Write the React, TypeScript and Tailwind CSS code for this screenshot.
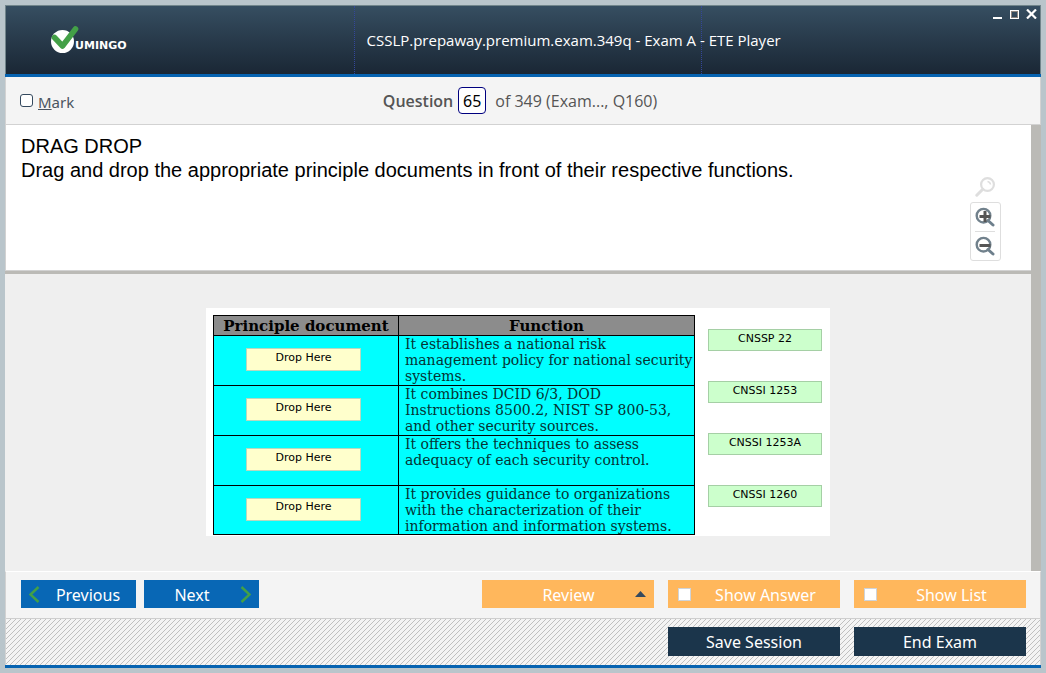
const rows = [
  ['It establishes a national risk', 'management policy for national security', 'systems.'],
  ['It combines DCID 6/3, DOD', 'Instructions 8500.2, NIST SP 800-53,', 'and other security sources.'],
  ['It offers the techniques to assess', 'adequacy of each security control.'],
  ['It provides guidance to organizations', 'with the characterization of their', 'information and information systems.'],
];

const documents = ['CNSSP 22', 'CNSSI 1253', 'CNSSI 1253A', 'CNSSI 1260'];

function Logo() {
  return (
    <div className="flex items-center">
      <svg width="28" height="28" viewBox="0 0 28 28" aria-hidden="true">
        <circle cx="11.5" cy="15.5" r="11.5" fill="#fff" />
        <path d="M3.5 11.5 L11.5 20 L24.5 3" fill="none" stroke="#43a047" strokeWidth="5.6" strokeLinecap="round" strokeLinejoin="round" />
      </svg>
      <span className="-ml-1 mt-3 font-['DejaVu_Sans',sans-serif] text-[11px] leading-3 font-bold text-white">UMINGO</span>
    </div>
  );
}

function Lens({ sign }: { sign: 'plus' | 'minus' }) {
  return (
    <svg width="20" height="20" viewBox="0 0 20 20" fill="none" aria-hidden="true">
      <path d="M13 13.5 L18 18" stroke="#6d7f8c" strokeWidth="3" strokeLinecap="round" />
      <circle cx="8.5" cy="8.7" r="6.8" stroke="#71818c" strokeWidth="2.4" />
      <path d="M4.5 9.5 H15.5" stroke="#555" strokeWidth="3" />
      {sign === 'plus' && <path d="M10 4 V15" stroke="#555" strokeWidth="3" />}
    </svg>
  );
}

function TitleBar() {
  return (
    <header className="relative grid h-[69px] grid-cols-[minmax(0,1fr)_minmax(0,1fr)_339px] border border-b-0 border-[#71858b] bg-linear-to-b from-[#364e61] to-[#1a2735]">
      <div className="flex items-center pl-[45px]">
        <Logo />
      </div>
      <h1 className="relative z-10 flex items-center border-l border-dotted border-[#34479a] pl-3 font-['Open_Sans','Noto_Sans',sans-serif] text-[15px] font-medium whitespace-nowrap text-white">
        CSSLP.prepaway.premium.exam.349q - Exam A - ETE Player
      </h1>
      <div className="border-l border-dotted border-[#34479a]" />
      <div className="absolute top-0.5 right-[3px] flex gap-[5px] text-white">
        <button type="button" aria-label="Minimize" className="flex size-3 items-end justify-center pb-px">
          <span className="h-0.5 w-[9px] bg-white" />
        </button>
        <button type="button" aria-label="Maximize" className="flex size-3 items-center justify-center">
          <span className="size-[9px] border border-white outline-1 -outline-offset-2 outline-[#8d8580]" />
        </button>
        <button type="button" aria-label="Close" className="flex size-3 items-center justify-center">
          <svg width="11" height="10" viewBox="0 0 11 10">
            <path d="M1 .5 L10 9.5 M10 .5 L1 9.5" stroke="#fff" strokeWidth="2.2" />
          </svg>
        </button>
      </div>
    </header>
  );
}

export default function App() {
  return (
    <div className="flex min-h-screen flex-col bg-[#b9c5cb] p-[5px] font-['Noto_Sans',sans-serif]">
      <TitleBar />
      <div className="h-[3px] bg-[#0663b1]" />

      <div className="flex h-12 items-center border-x border-b border-[#d2d2d2] bg-[#f4f4f4] pr-5 text-[16px] text-[#555]">
        <label className="flex flex-1 items-center gap-[5px] pl-3.5 text-[15px] text-[#4a5560]">
          <input type="checkbox" className="size-[13px] appearance-none rounded-[3px] border border-[#34495e] bg-white checked:bg-[#34495e]" />
          <span className="mt-1">
            <u>M</u>ark
          </span>
        </label>
        <div className="flex items-center">
          <label htmlFor="question" className="font-['Open_Sans','Noto_Sans',sans-serif] font-semibold">
            Question
          </label>
          <input id="question" defaultValue="65" className="mx-[5px] h-[27px] w-7 rounded-[4px] border border-[#00007f] bg-white text-center text-black" />
          <span className="ml-1 font-['Open_Sans','Noto_Sans',sans-serif]">of 349 (Exam..., Q160)</span>
        </div>
        <div className="flex-1" />
      </div>

      <main className="flex flex-1 flex-col border-r-[10px] border-[#bbbab6]">
        <section className="relative h-[146px] border-b border-l border-[#d2d2d2] bg-white pt-[9px] pl-[15px] font-['Liberation_Sans',Arial,sans-serif] text-[20px] leading-6 text-black">
          <p>DRAG DROP</p>
          <p>Drag and drop the appropriate principle documents in front of their respective functions.</p>
          <div className="absolute right-[30px] bottom-[9px] flex w-8 flex-col items-center gap-[5px]">
            <button type="button" aria-label="Reset zoom">
              <svg width="20" height="20" viewBox="0 0 20 20" fill="none">
                <circle cx="12.5" cy="7.5" r="6.4" stroke="#dedede" strokeWidth="2.2" />
                <path d="M7.5 12.5 L1.8 18.2" stroke="#dedede" strokeWidth="3" strokeLinecap="round" />
                <path d="M12.5 4.5 A3.5 3.5 0 0 1 15.5 7.5" stroke="#dedede" strokeWidth="1.5" />
              </svg>
            </button>
            <div className="flex w-[31px] flex-col items-center rounded-[3px] border border-[#dedede] py-1">
              <button type="button" aria-label="Zoom in" className="border-b border-[#dedede] pb-1">
                <Lens sign="plus" />
              </button>
              <button type="button" aria-label="Zoom out" className="pt-1">
                <Lens sign="minus" />
              </button>
            </div>
          </div>
        </section>
        <div className="h-[3px] bg-[#bbbab6]" />

        <section className="flex flex-1 justify-center bg-[#efefef] pt-[34px] pb-[35px]">
          <div className="flex h-[228px] items-start bg-white py-[7px] pr-2 pl-[7px] text-black">
            <table className="w-[482px] table-fixed border-collapse font-['DejaVu_Serif',serif]">
              <colgroup>
                <col className="w-[185px]" />
                <col />
              </colgroup>
              <thead>
                <tr className="h-5 bg-[#8c8c8c] text-[15px] leading-[18px]">
                  <th className="border border-black p-0">Principle document</th>
                  <th className="border border-black p-0">Function</th>
                </tr>
              </thead>
              <tbody>
                {rows.map((lines) => (
                  <tr key={lines[0]} className="h-[50px] bg-[#00ffff] last:h-[49px]">
                    <td className="border border-black p-0 pr-[5px] pb-0.5">
                      <button type="button" className="mx-auto block h-[23px] w-[115px] border border-[#b5d9c0] bg-[#ffffcc] pb-1 font-['DejaVu_Sans',sans-serif] text-[11px] leading-4">
                        Drop Here
                      </button>
                    </td>
                    <td className="border border-black p-0 pl-1.5 align-top text-[14px] leading-4 whitespace-pre-line text-[#053434]">{lines.join('\n')}</td>
                  </tr>
                ))}
              </tbody>
            </table>
            <div className="ml-[13px] flex flex-col gap-[30px] pt-3.5">
              {documents.map((name) => (
                <button key={name} type="button" draggable className="h-[22px] w-[114px] border border-[#a5cfa5] bg-[#ccffcc] pb-0.5 font-['DejaVu_Sans',sans-serif] text-[11px] leading-4">
                  {name}
                </button>
              ))}
            </div>
          </div>
        </section>
      </main>

      <footer className="border-x border-t border-x-[#d2d2d2] border-t-white bg-[#f4f4f4] text-[16px] text-white">
        <div className="flex h-[47px] items-start border-b border-[#cfcfcf] pt-2 pr-3.5 pl-[15px]">
          <div className="flex flex-1 gap-2">
            <button type="button" className="flex h-7 w-[115px] items-center bg-[#0867b5] pl-2">
              <svg width="11" height="17" viewBox="0 0 11 17" fill="none" stroke="#43a047" strokeWidth="2.4">
                <path d="M9.5 1 L1.5 8.5 L9.5 16" />
              </svg>
              <span className="flex-1 pt-0.5">Previous</span>
            </button>
            <button type="button" className="flex h-7 w-[115px] items-center bg-[#0867b5] pr-2">
              <span className="flex-1 pt-0.5">Next</span>
              <svg width="11" height="17" viewBox="0 0 11 17" fill="none" stroke="#43a047" strokeWidth="2.4">
                <path d="M1.5 1 L9.5 8.5 L1.5 16" />
              </svg>
            </button>
          </div>
          <div className="flex gap-3.5">
            <button type="button" className="flex h-7 w-[172px] items-center bg-[#ffb75c] pr-2 pl-5">
              <span className="flex-1 pt-0.5">Review</span>
              <svg width="11" height="6" viewBox="0 0 11 6">
                <path d="M5.5 0 L11 6 H0 Z" fill="#34495e" />
              </svg>
            </button>
            <label className="flex h-7 w-[172px] items-center bg-[#ffb75c] pl-2.5">
              <input type="checkbox" className="size-[13px] appearance-none border border-[#cfd3d8] bg-white checked:bg-[#34495e]" />
              <span className="flex-1 pt-0.5 text-center">Show Answer</span>
            </label>
            <label className="flex h-7 w-[172px] items-center bg-[#ffb75c] pl-2.5">
              <input type="checkbox" className="size-[13px] appearance-none border border-[#cfd3d8] bg-white checked:bg-[#34495e]" />
              <span className="flex-1 pt-0.5 text-center">Show List</span>
            </label>
          </div>
        </div>
        <div className="flex h-[46px] items-start justify-end gap-3.5 bg-[linear-gradient(135deg,transparent_45%,#c0c0c0_45%,#c0c0c0_55%,transparent_55%)] bg-size-[5px_5px] pt-2 pr-3.5 pl-[15px]">
          <button type="button" className="h-[29px] w-[172px] bg-[#1b354b]">Save Session</button>
          <button type="button" className="h-[29px] w-[172px] bg-[#1b354b]">End Exam</button>
        </div>
      </footer>
      <div className="h-[3px] bg-[#0663b1]" />
    </div>
  );
}
